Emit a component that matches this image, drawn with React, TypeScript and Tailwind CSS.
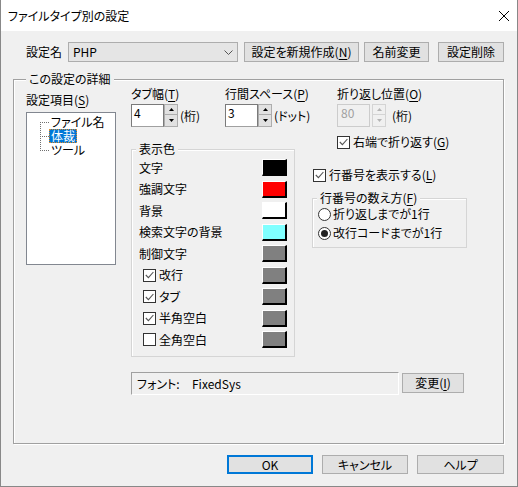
import type { ReactNode } from 'react';

function U({ c }: { c: string }) {
  return <span className="underline underline-offset-[2px]">{c}</span>;
}

function Button({ children, className = '' }: { children: ReactNode; className?: string }) {
  return (
    <div className={`flex shrink-0 items-center justify-center bg-[#e1e1e1] ${className}`}>{children}</div>
  );
}

function Check({ on }: { on?: boolean }) {
  return (
    <span className="flex h-[13px] w-[13px] shrink-0 items-center justify-center border border-[#333] bg-white">
      {on && (
        <svg width="9" height="8" viewBox="0 0 9 8">
          <path d="M0.8 4 L3.4 6.6 L8.4 1" fill="none" stroke="#555" strokeWidth="1.1" />
        </svg>
      )}
    </span>
  );
}

function Radio({ on }: { on?: boolean }) {
  return (
    <span className="flex h-[13px] w-[13px] shrink-0 items-center justify-center rounded-full border border-[#333] bg-white">
      {on && <span className="h-[7px] w-[7px] rounded-full bg-[#222]" />}
    </span>
  );
}

function Spin({ disabled }: { disabled?: boolean }) {
  const fill = disabled ? '#b4b4b4' : '#000';
  const box = disabled ? 'border-[#d4d4d4] bg-[#f0f0f0]' : 'border-[#adadad] bg-[#e1e1e1]';
  return (
    <div className="flex h-[23px] w-[14px] shrink-0 flex-col">
      <div className={`flex h-[11px] items-center justify-center border ${box}`}>
        <svg width="5" height="3" viewBox="0 0 5 3">
          <path d="M2.5 0 L5 3 L0 3Z" fill={fill} />
        </svg>
      </div>
      <div className={`flex h-[12px] items-center justify-center border border-t-0 ${box}`}>
        <svg width="5" height="3" viewBox="0 0 5 3">
          <path d="M0 0 L5 0 L2.5 3Z" fill={fill} />
        </svg>
      </div>
    </div>
  );
}

function SpinField({ label, value, unit, disabled, className = '' }: { label: ReactNode; value: string; unit: string; disabled?: boolean; className?: string }) {
  return (
    <div className={`flex flex-col ${className}`}>
      <div className="h-[14px]">{label}</div>
      <div className="mt-[3px] flex items-center">
        <div
          className={`h-[23px] w-[33px] pt-[1px] ${
            disabled ? 'border border-[#cccccc] bg-[#f0f0f0] pl-[3px] text-[#a0a0a0]' : 'border border-[#7a7a7a] border-b-[#a0a0a0] bg-white pl-[2px]'
          }`}
        >
          {value}
        </div>
        <div className={disabled ? 'ml-[2px]' : ''}>
          <Spin disabled={disabled} />
        </div>
        <span className={disabled ? 'ml-[6px]' : 'ml-[2px]'}>{unit}</span>
      </div>
    </div>
  );
}

function Swatch({ color }: { color: string }) {
  return (
    <span
      className={`h-[17px] w-[25px] shrink-0 border-t border-l border-r-2 border-b-2 border-t-white border-l-white border-r-black border-b-black ${color}`}
    />
  );
}

const colors: { label: string; color: string; check?: boolean; on?: boolean }[] = [
  { label: '文字', color: 'bg-black' },
  { label: '強調文字', color: 'bg-[#ff0000]' },
  { label: '背景', color: 'bg-white' },
  { label: '検索文字の背景', color: 'bg-[#80ffff]' },
  { label: '制御文字', color: 'bg-[#808080]' },
  { label: '改行', color: 'bg-[#808080]', check: true, on: true },
  { label: 'タブ', color: 'bg-[#808080]', check: true, on: true },
  { label: '半角空白', color: 'bg-[#808080]', check: true, on: true },
  { label: '全角空白', color: 'bg-[#808080]', check: true },
];

export default function App() {
  return (
    <div className="flex h-[487px] w-[518px] flex-col border-x border-b border-[#888888] bg-[#f0f0f0] font-['Noto_Sans_CJK_JP','Noto_Sans',sans-serif] text-[12px] leading-[14px] text-black [font-feature-settings:'palt']">
      <div className="flex h-[31px] shrink-0 items-center justify-between bg-white pl-[7px] pr-[8px]">
        <span>ファイルタイプ別の設定</span>
        <svg width="10" height="10" viewBox="0 0 10 10">
          <path d="M0 0 L10 10 M10 0 L0 10" stroke="#000" strokeWidth="1" />
        </svg>
      </div>

      <div className="flex flex-1 flex-col">
        <div className="mt-[11px] flex h-[20px] items-center pl-[25px]">
          <span className="w-[42px] shrink-0">設定名</span>
          <div className="flex h-[20px] w-[170px] shrink-0 items-center justify-between border border-[#adadad] bg-[#e5e5e5] pl-[4px] pr-[4px]">
            <span>PHP</span>
            <svg width="9" height="5" viewBox="0 0 9 5">
              <path d="M0.5 0.5 L4.5 4.5 L8.5 0.5" fill="none" stroke="#555" strokeWidth="1" />
            </svg>
          </div>
          <Button className="ml-[6px] h-[20px] w-[115px] border border-[#adadad]">
            設定を新規作成(<U c="N" />)
          </Button>
          <Button className="ml-[5px] h-[20px] w-[65px] border border-[#adadad]">名前変更</Button>
          <Button className="ml-[9px] h-[20px] w-[66px] border border-[#adadad]">設定削除</Button>
        </div>

        <div className="relative ml-[12px] mt-[17px] h-[365px] w-[491px] shrink-0 border border-[#a0a0a0] shadow-[inset_1px_1px_0_#fff,1px_1px_0_#fff]">
          <span className="absolute -top-[8px] left-[12px] bg-[#f0f0f0] px-[3px]">この設定の詳細</span>

          <div className="flex pl-[12px] pt-[7px]">
            <div className="mt-[6px] flex w-[90px] shrink-0 flex-col">
              <div className="h-[14px]">
                設定項目(<U c="S" />)
              </div>
              <div className="relative mt-[5px] h-[153px] border border-[#828790] bg-white pl-[22px] pt-[2px]">
                <svg className="absolute left-0 top-0" width="30" height="50" viewBox="0 0 30 50">
                  <path d="M13.5 9 V37 M13 9.5 H22 M13 23.5 H22 M13 37.5 H22" stroke="#707070" strokeWidth="1" strokeDasharray="1 1" fill="none" />
                </svg>
                <div className="flex h-[14px] items-center">
                  <span className="h-[14px] border border-transparent px-[1px] leading-[12px]">ファイル名</span>
                </div>
                <div className="flex h-[14px] items-center">
                  <span className="h-[14px] border border-dotted border-[#e08a2a] bg-[#0078d7] px-[1px] leading-[12px] text-white">体裁</span>
                </div>
                <div className="flex h-[14px] items-center">
                  <span className="h-[14px] border border-transparent px-[1px] leading-[12px]">ツール</span>
                </div>
              </div>
            </div>

            <div className="ml-[15px] flex flex-col">
              <div className="flex items-start">
                <SpinField className="w-[94px]" label={<>タブ幅(<U c="T" />)</>} value="4" unit="(桁)" />
                <SpinField className="w-[112px]" label={<>行間スペース(<U c="P" />)</>} value="3" unit="(ドット)" />
                <div className="flex flex-col">
                  <SpinField label={<>折り返し位置(<U c="O" />)</>} value="80" unit="(桁)" disabled />
                  <div className="mt-[8px] flex h-[14px] items-center gap-[3px]">
                    <Check on />
                    <span>
                      右端で折り返す(<U c="G" />)
                    </span>
                  </div>
                </div>
              </div>

              <div className="flex items-start">
                <div className="relative h-[208px] w-[164px] shrink-0 border border-[#d5d5d5] pt-[7px] shadow-[inset_1px_1px_0_#fff]">
                  <span className="absolute -top-[8px] left-[4px] bg-[#f0f0f0] px-[3px]">表示色</span>
                  {colors.map((c) => (
                    <div key={c.label} className="flex h-[21.5px] items-center justify-between pl-[7px] pr-[7px]">
                      <div className="flex items-center">
                        {c.check && (
                          <span className="ml-[4px] mr-[3px]">
                            <Check on={c.on} />
                          </span>
                        )}
                        <span>{c.label}</span>
                      </div>
                      <Swatch color={c.color} />
                    </div>
                  ))}
                </div>

                <div className="ml-[17px] mt-[19px] flex flex-col">
                  <div className="flex h-[14px] items-center gap-[3px] pl-[1px]">
                    <Check on />
                    <span>
                      行番号を表示する(<U c="L" />)
                    </span>
                  </div>
                  <div className="relative mt-[16px] h-[50px] w-[155px] border border-[#d5d5d5] pl-[5px] pt-[8px] shadow-[inset_1px_1px_0_#fff]">
                    <span className="absolute -top-[8px] left-[4px] bg-[#f0f0f0] px-[3px]">
                      行番号の数え方(<U c="F" />)
                    </span>
                    <div className="flex h-[14px] items-center gap-[2px]">
                      <Radio />
                      <span>折り返しまでが1行</span>
                    </div>
                    <div className="mt-[5px] flex h-[14px] items-center gap-[2px]">
                      <Radio on />
                      <span>改行コードまでが1行</span>
                    </div>
                  </div>
                </div>
              </div>

              <div className="mt-[15px] flex items-start">
                <div className="flex h-[23px] w-[268px] items-center border border-[#a0a0a0] border-b-white border-r-white pl-[5px]">
                  <span className="w-[55px]">フォント:</span>
                  <span>FixedSys</span>
                </div>
                <Button className="ml-[3px] mt-[1px] h-[20px] w-[62px] border border-[#adadad]">
                  変更(<U c="I" />)
                </Button>
              </div>
            </div>
          </div>
        </div>

        <div className="mt-[11px] flex justify-end gap-[9px] pr-[13px]">
          <Button className="h-[19px] w-[86px] border-2 border-[#0078d7]">OK</Button>
          <Button className="h-[19px] w-[86px] border border-[#adadad]">キャンセル</Button>
          <Button className="h-[19px] w-[87px] border border-[#adadad]">ヘルプ</Button>
        </div>
      </div>
    </div>
  );
}
